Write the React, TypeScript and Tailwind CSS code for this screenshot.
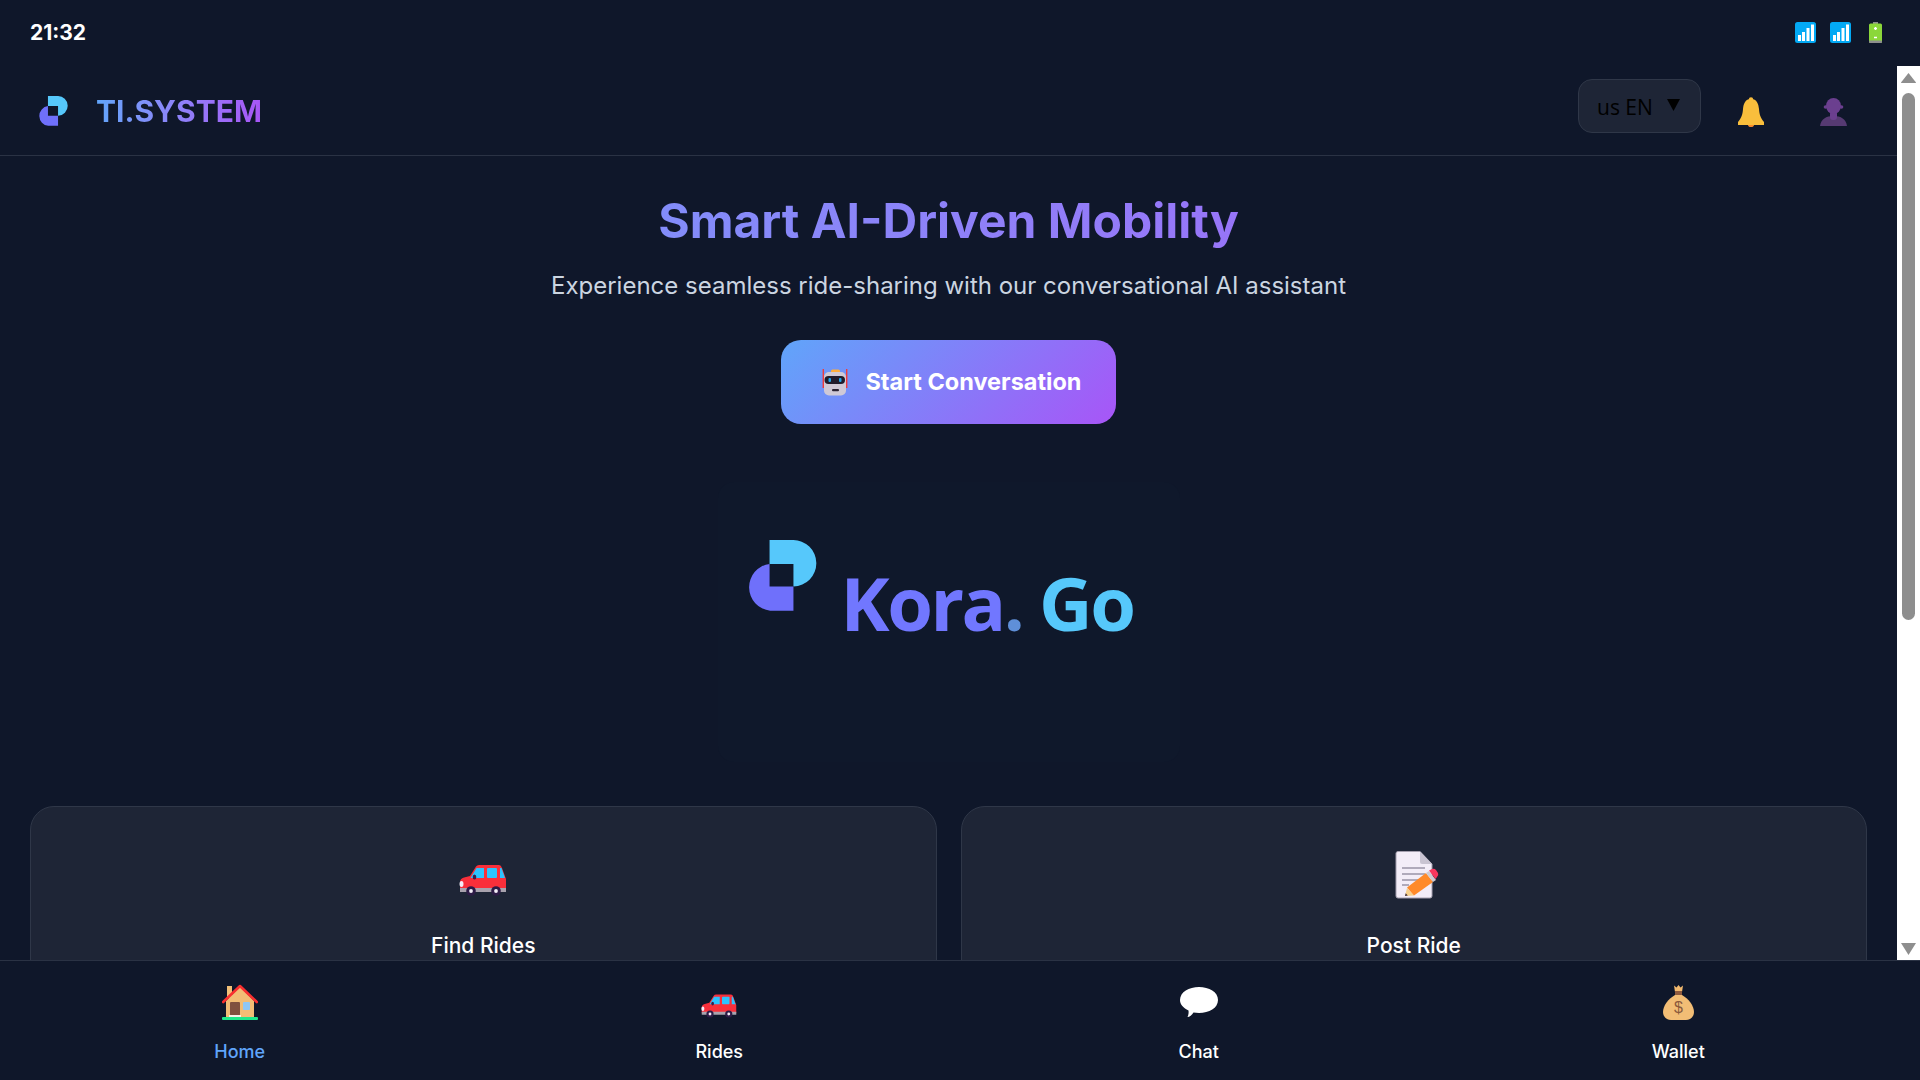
const FONT = "font-['Inter',sans-serif]";

function SignalIcon() {
  return (
    <svg width="21" height="21" viewBox="0 0 21 21">
      <rect width="21" height="21" rx="2.500" fill="#03a9f4" />
      <rect x="3" y="13" width="3" height="6" fill="#fff" />
      <rect x="7" y="10" width="3" height="9" fill="#fff" />
      <rect x="11.500" y="6" width="3" height="13" fill="#fff" />
      <rect x="16" y="2.500" width="3" height="16.500" fill="#fff" />
    </svg>
  );
}

function BatteryIcon() {
  return (
    <svg width="13" height="21" viewBox="0 0 13 21">
      <rect x="4" width="5" height="2" fill="#8e8e8e" />
      <rect y="1.500" width="13" height="19.500" rx="1.500" fill="#8bd73a" />
      <rect y="18.500" width="13" height="2.500" rx="1" fill="#8e8e8e" />
      <path d="M5 6.500h3M6.500 5v3M5 15.500h3" stroke="#fff" strokeWidth="1.300" />
    </svg>
  );
}

function LogoMark({ size }: { size: number }) {
  return (
    <svg width={size} height={size} viewBox="146 660 212 214">
      <path d="M216 660H286A70 70 0 0 1 288 800V732H216Z" fill="#56c8fb" />
      <path d="M216 732V800H288V873H218A71 71 0 0 1 216 732Z" fill="#6f70fb" />
    </svg>
  );
}

function BellIcon() {
  return (
    <svg width="28" height="30" viewBox="0 0 28 30">
      <circle cx="14" cy="27" r="3.200" fill="#f98a2c" />
      <circle cx="14" cy="2.400" r="2.200" fill="#f9be3c" />
      <path d="M14 2C8 2 6.500 7 6 12C5.600 17.500 4.500 21 1 25V28H27V25C23.500 21 22.400 17.500 22 12C21.500 7 20 2 14 2Z" fill="#f9be3c" />
    </svg>
  );
}

function PersonIcon() {
  return (
    <svg width="27" height="28" viewBox="0 0 27 28">
      <path d="M0 28C1 21 6 18 13.500 18C21 18 26 21 27 28Z" fill="#563a72" />
      <rect x="10" y="13" width="7" height="9" rx="3" fill="#6b3f8f" />
      <ellipse cx="13.500" cy="8" rx="7.500" ry="8" fill="#6b3f8f" />
      <circle cx="5.500" cy="9" r="1.800" fill="#6b3f8f" />
      <circle cx="21.500" cy="9" r="1.800" fill="#6b3f8f" />
    </svg>
  );
}

function RobotIcon() {
  return (
    <svg width="28" height="28" viewBox="0 0 28 28">
      <path d="M2.300 1V20M25.700 1V20" stroke="#f03a3a" strokeWidth="1.400" />
      <rect x="10" y="1.500" width="9" height="4" rx="1.500" fill="#ffae3b" />
      <rect x="3" y="4" width="22" height="23.500" rx="5" fill="#cfc9d6" />
      <rect x="3.500" y="8" width="20.500" height="8" rx="4" fill="#201c2b" />
      <rect x="7.500" y="10" width="2.500" height="4" rx="1" fill="#1fa4e8" />
      <rect x="18" y="10" width="2.500" height="4" rx="1" fill="#1fa4e8" />
      <rect x="11" y="21" width="7" height="2.200" rx="1" fill="#2a2333" />
    </svg>
  );
}

function CarIcon({ size }: { size: number }) {
  return (
    <svg width={size} height={size} viewBox="0 0 48 48">
      <path d="M17 15.500Q18 14 20 14H40Q42 14 43 17L47 28V39H1V31Q1 27.500 5 26.500L11 25Z" fill="#f92f3a" />
      <path d="M11.500 27L17.500 17H25V27Z" fill="#2bc4ff" />
      <rect x="28" y="17" width="10" height="10" rx="1" fill="#2bc4ff" />
      <path d="M41 17H42.500L46 27H41Z" fill="#2bc4ff" />
      <ellipse cx="15.500" cy="26" rx="1.800" ry="2.500" fill="#3a1d4a" />
      <rect x="1" y="37" width="46" height="4" fill="#a8a2ad" />
      <ellipse cx="2.500" cy="33" rx="2" ry="3" fill="#f4eef7" />
      <circle cx="12" cy="40" r="4.800" fill="#2d1b46" />
      <circle cx="12" cy="40" r="1.900" fill="#f4eef7" />
      <circle cx="37" cy="40" r="4.800" fill="#2d1b46" />
      <circle cx="37" cy="40" r="1.900" fill="#f4eef7" />
    </svg>
  );
}

function MemoIcon() {
  return (
    <svg width="48" height="48" viewBox="0 0 48 48">
      <path d="M3 .5H25L37 13V45Q37 47 35 47H3Q1 47 1 45V2.500Q1 .5 3 .5Z" fill="#f3edf8" stroke="#a49fae" strokeWidth="1" />
      <path d="M25 .5L37 13H27Q25 13 25 11Z" fill="#c9c4d2" />
      <path d="M7 17H30M7 23H30M7 29H25M7 34H14" stroke="#9a94a6" strokeWidth="1.600" />
      <path d="M10 45L12 37L19 44.500Z" fill="#f7d08a" />
      <path d="M10 45L10.700 42.300L12.800 44.500Z" fill="#3a2c3c" />
      <path d="M12 36.500L31 22L38 31L19 44.500Z" fill="#ff8a2a" />
      <path d="M31 22L34 20L41 29L38 31Z" fill="#cfcbd4" />
      <path d="M34 19.500L37 18Q39.500 17 41 19L43 22Q44 24.500 42 26L40.500 28Z" fill="#f7375e" />
    </svg>
  );
}

function HomeIcon() {
  return (
    <svg width="36" height="36" viewBox="0 0 36 36">
      <rect x="5" y="2" width="5" height="12" fill="#f2c078" />
      <path d="M4 17L18 2.500L32 17V33H4Z" fill="#f2bd75" />
      <rect x="8" y="18" width="10" height="13.500" rx="1" fill="#80513f" />
      <rect x="21" y="18" width="7" height="8" rx="1" fill="#8fc7f5" />
      <rect x="7" y="31" width="12" height="2" fill="#f7f1e8" />
      <rect x="0" y="33" width="36" height="3" rx="1" fill="#1ee88a" />
      <path d="M1.200 18L18 2L34.800 18" fill="none" stroke="#f92f2f" strokeWidth="2.600" strokeLinecap="round" strokeLinejoin="round" />
    </svg>
  );
}

function ChatIcon() {
  return (
    <svg width="38" height="36" viewBox="0 0 38 36">
      <path d="M19 3C29 3 38 8 38 16C38 24 29 29 19 29C17 29 15 28.800 13.500 28.500C12 31 9.500 33 7.500 33C8.500 31 8.800 28.500 8.500 26.500C3.500 24 0 20.500 0 16C0 8 9 3 19 3Z" fill="#fff" />
    </svg>
  );
}

function MoneyBagIcon() {
  return (
    <svg width="36" height="36" viewBox="0 0 36 36" className="ml-[3px]">
      <path d="M12 1.500L14.500 3.500L16.500 1L18.500 3.500L21 1.500L20 8H13Z" fill="#f2b96e" />
      <rect x="13" y="7" width="7" height="4" fill="#8f5b3e" />
      <path d="M13 11H20C27 15 32 22 32 28C32 33 28 36 24 36H9C5 36 1 33 1 28C1 22 6 15 13 11Z" fill="#f2bd75" />
      <text x="16.500" y="29" textAnchor="middle" fontSize="16" fontFamily="Liberation Sans, sans-serif" fill="#8a5a3c">$</text>
    </svg>
  );
}

const navItems = [
  { label: "Home", icon: <HomeIcon />, active: true },
  { label: "Rides", icon: <CarIcon size={36} />, active: false },
  { label: "Chat", icon: <ChatIcon />, active: false },
  { label: "Wallet", icon: <MoneyBagIcon />, active: false },
];

function Scrollbar() {
  return (
    <div className="w-[23px] shrink-0 bg-white flex flex-col items-center pt-[7px] pb-[5px]">
      <svg width="15" height="10" viewBox="0 0 15 10" className="shrink-0">
        <path d="M7.500 0L15 9.500Q15 10 14 10H1Q0 10 0 9.500Z" fill="#8e8e8e" />
      </svg>
      <div className="w-[13px] h-[527px] mt-[10px] rounded-full bg-[#8e8e8e]" />
      <svg width="15" height="12" viewBox="0 0 15 12" className="shrink-0 mt-auto">
        <path d="M0 0H15L7.500 12Z" fill="#8e8e8e" />
      </svg>
    </div>
  );
}

export default function App() {
  return (
    <div className={`${FONT} h-[1080px] w-[1920px] overflow-hidden flex flex-col bg-[#0f172a] text-white`}>
      {/* Status bar */}
      <div className="h-[66px] shrink-0 flex items-center justify-between pl-[30px] pr-[38px] pb-[2px]">
        <span className="text-[21px] font-bold leading-none">21:32</span>
        <div className="flex items-center">
          <SignalIcon />
          <div className="ml-[14px]"><SignalIcon /></div>
          <div className="ml-[18px]"><BatteryIcon /></div>
        </div>
      </div>

      <div className="flex flex-1 min-h-0">
        <div className="flex-1 min-w-0 overflow-hidden flex flex-col">
          {/* Header */}
          <header className="h-[90px] shrink-0 border-b border-[#2a3244] flex items-center pl-[38px] pr-[50px]">
            <LogoMark size={30} />
            <span className="ml-[28px] text-[30px] font-bold leading-none bg-linear-to-r from-[#60a5fa] to-[#a855f7] bg-clip-text text-transparent">
              TI.SYSTEM
            </span>
            <div className="ml-auto flex items-center">
              <div className="w-[123px] h-[54px] mb-[10px] rounded-[14px] bg-[#1e2536] border border-[#2f3748] relative flex items-center pl-[18px]">
                <span className="font-['Open_Sans',sans-serif] text-[21px] text-black leading-none mt-[3px]">us EN</span>
                <svg width="13" height="12" viewBox="0 0 13 12" className="absolute left-[88px] top-[19px]">
                  <path d="M0 0H13L6.500 12Z" fill="#000" />
                </svg>
              </div>
              <div className="ml-[36px] mt-[2px]"><BellIcon /></div>
              <div className="ml-[55px] mt-[2px]"><PersonIcon /></div>
            </div>
          </header>

          {/* Hero */}
          <section className="flex flex-col items-center pt-[36px]">
            <h1 className="w-full text-center text-[48px] leading-[58px] font-bold bg-linear-to-r from-[#60a5fa] to-[#a855f7] bg-clip-text text-transparent">
              Smart AI-Driven Mobility
            </h1>
            <p className="mt-[18px] text-[24px] leading-[36px] text-[#cbd5e1]">
              Experience seamless ride-sharing with our conversational AI assistant
            </p>
            <button className="mt-[36px] w-[335px] h-[84px] rounded-[20px] flex items-center justify-center pl-[6px] bg-[linear-gradient(135deg,#60a5fa,#a855f7)] text-[23.500px] font-bold text-white">
              <RobotIcon />
              <span className="ml-[16px]">Start Conversation</span>
            </button>

            {/* Kora.Go logo */}
            <div className="mt-[58px] w-[462px] h-[280px] rounded-2xl bg-[#0f182b] flex items-start justify-center pr-[18px]">
              <div className="flex items-start mt-[58px]">
                <LogoMark size={71} />
                <span className="ml-[24px] mt-[23px] font-['Open_Sans',sans-serif] text-[74px] leading-[80px] font-bold tracking-[-2.500px] whitespace-nowrap">
                  <span className="text-[#7177ff]">Kora</span>
                  <span className="text-[#5f8fd8]">.</span>
                  <span className="text-[#56c8fb]"> Go</span>
                </span>
              </div>
            </div>
          </section>

          {/* Feature cards */}
          <section className="grid grid-cols-2 gap-[24px] px-[30px] mt-[44px]">
            <div className="h-[240px] rounded-[24px] bg-[#1e2536] border border-[#2f3748] flex flex-col items-center pt-[44px]">
              <CarIcon size={48} />
              <span className="mt-[33px] text-[21px] leading-[28px] font-medium">Find Rides</span>
            </div>
            <div className="h-[240px] rounded-[24px] bg-[#1e2536] border border-[#2f3748] flex flex-col items-center pt-[44px]">
              <div className="ml-[10px]"><MemoIcon /></div>
              <span className="mt-[33px] text-[21px] leading-[28px] font-medium">Post Ride</span>
            </div>
          </section>
        </div>
        <Scrollbar />
      </div>

      {/* Bottom nav */}
      <nav className="h-[120px] shrink-0 bg-[#0f172a] border-t border-[#2a3244] grid grid-cols-4 pr-[2px]">
        {navItems.map((item) => (
          <div key={item.label} className="flex flex-col items-center pt-[23px]">
            <div className="h-[36px] flex items-center justify-center">{item.icon}</div>
            <span className={`mt-[18px] text-[18px] leading-[28px] font-medium ${item.active ? "text-[#60a5fa]" : "text-white"}`}>
              {item.label}
            </span>
          </div>
        ))}
      </nav>
    </div>
  );
}
